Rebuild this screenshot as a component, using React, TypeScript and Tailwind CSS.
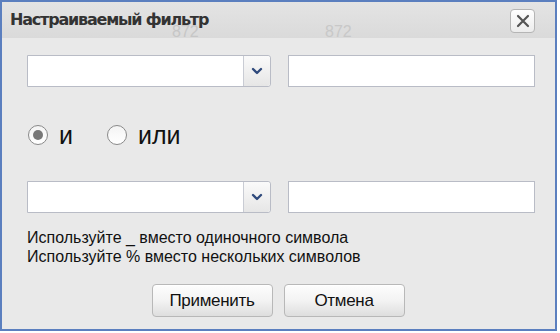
import { ChevronDown } from 'lucide-react'

function Select() {
  return (
    <div className="flex h-[32px] w-[244px] border border-[#b9bcc6] bg-white rounded-r-[3px]">
      <div className="flex-1" />
      <div className="flex w-[27px] items-center justify-center border-l border-[#c9ccd4] bg-gradient-to-b from-[#fafafa] to-[#e6e6e6] rounded-r-[3px]">
        <ChevronDown size={16} strokeWidth={3.5} className="text-[#2f4a7c]" />
      </div>
    </div>
  )
}

function TextBox() {
  return <div className="h-[32px] w-[247px] border border-[#b9bcc6] bg-white" />
}

function Radio({ checked, label }: { checked?: boolean; label: string }) {
  return (
    <label className="flex items-center gap-[11px]">
      <span className="flex h-[20px] w-[20px] items-center justify-center rounded-full border border-[#8a8a8a] bg-gradient-to-b from-[#f4f4f4] to-white">
        {checked && <span className="h-[10px] w-[10px] rounded-full bg-[#777]" />}
      </span>
      <span className="text-[25px] leading-none text-[#111]">{label}</span>
    </label>
  )
}

function Btn({ children }: { children: string }) {
  return (
    <button className="h-[33px] w-[121px] rounded-[4px] border border-[#b8b8b8] bg-gradient-to-b from-[#fdfdfd] via-[#f3f3f3] to-[#dedede] text-[17px] tracking-[-0.3px] text-[#111] shadow-[inset_0_1px_0_#fff]">
      {children}
    </button>
  )
}

export default function App() {
  return (
    <div className="h-[333px] w-[560px] bg-white font-['Liberation_Sans',Arial,sans-serif]">
      <div className="flex h-[331px] w-[557px] flex-col border-2 border-[#5b7fbf] bg-[#e9e9e9]">
        {/* title bar */}
        <div className="relative flex h-[36px] items-center justify-between bg-gradient-to-b from-[#e4e4e4] to-[#dadada] pl-[8px] pr-[20px]">
          <span className="font-['DejaVu_Sans',Verdana,sans-serif] text-[16px] font-bold tracking-[-1.2px] text-[#333]">
            Настраиваемый фильтр
          </span>
          <span className="absolute left-[170px] top-[22px] text-[16px] leading-none text-[#c6c6c6]">872</span>
          <span className="absolute left-[323px] top-[22px] text-[16px] leading-none text-[#c8c8c8]">872</span>
          <button className="mt-[2px] flex h-[24px] w-[25px] items-center justify-center rounded-[4px] border border-[#b5b5b5] bg-gradient-to-b from-white to-[#ececec]">
            <svg width="14" height="14" viewBox="0 0 14 14">
              <path d="M2 2 L12 12 M12 2 L2 12" stroke="#555" strokeWidth="2.2" strokeLinecap="round" />
            </svg>
          </button>
        </div>

        <div className="flex flex-1 flex-col pl-[25px] pt-[17px]">
          <div className="flex gap-[17px]">
            <Select />
            <TextBox />
          </div>

          <div className="mt-[36px] flex h-[24px] items-center gap-[34px] pl-[1px]">
            <Radio checked label="и" />
            <Radio label="или" />
          </div>

          <div className="mt-[34px] flex gap-[17px]">
            <Select />
            <TextBox />
          </div>

          <div className="mt-[15px] text-[16px] leading-[19px] text-[#111]">
            <div>Используйте _ вместо одиночного символа</div>
            <div>Используйте % вместо нескольких символов</div>
          </div>

          <div className="mt-[18px] flex justify-center gap-[11px] pr-[26px]">
            <Btn>Применить</Btn>
            <Btn>Отмена</Btn>
          </div>
        </div>
      </div>
    </div>
  )
}
